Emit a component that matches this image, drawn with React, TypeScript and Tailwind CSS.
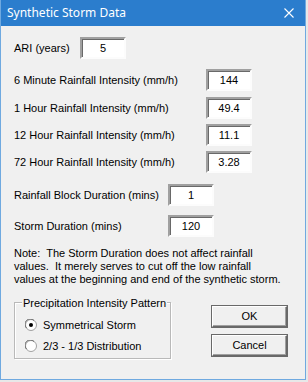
import React from 'react'

const FIELDS_TOP = [
  { label: '6 Minute Rainfall Intensity (mm/h)', value: '144', mt: 'mt-[10px]' },
  { label: '1 Hour Rainfall Intensity (mm/h)', value: '49.4', mt: 'mt-[6px]' },
  { label: '12 Hour Rainfall Intensity (mm/h)', value: '11.1', mt: 'mt-[5px]' },
  { label: '72 Hour Rainfall Intensity (mm/h)', value: '3.28', mt: 'mt-[5px]' },
]

function Field({ value }: { value: string }) {
  return (
    <div className="flex h-[22px] w-[46px] items-center justify-center border-2 border-t-[#a0a0a0] border-l-[#a0a0a0] border-b-[#fcfcfc] border-r-[#fcfcfc] bg-white shadow-[inset_1px_1px_0_0_#696969]">
      {value}
    </div>
  )
}

function Radio({ checked }: { checked?: boolean }) {
  return (
    <svg width="12" height="12" viewBox="0 0 12 12" className="shrink-0">
      <circle cx="6" cy="6" r="5.5" fill="#fff" stroke="#a0a0a0" />
      <path d="M1.5 9 A5 5 0 0 1 9 1.5" fill="none" stroke="#696969" />
      {checked && <circle cx="6" cy="6" r="2" fill="#000" />}
    </svg>
  )
}

function Button({ children }: { children: React.ReactNode }) {
  return (
    <button className="flex h-[21px] w-[75px] items-center justify-center border border-t-[#fff] border-l-[#fff] border-b-[#696969] border-r-[#696969] bg-[#f0f0f0] shadow-[inset_-1px_-1px_0_0_#a0a0a0,0_0_0_1px_#696969]">
      {children}
    </button>
  )
}

export default function App() {
  return (
    <div className="h-[382px] w-[308px] bg-[#e8e8e8] text-[11px] text-black" style={{ fontFamily: '"Liberation Sans", Arial, sans-serif' }}>
      <div className="flex h-[380px] w-[306px] flex-col border-x border-b border-[#6fa9e0] bg-[#f0f0f0]">
        {/* title bar */}
        <div className="flex h-[26px] shrink-0 items-center justify-between bg-[#2b7dcd] pl-[6px] pr-[11px] text-white">
          <span className="text-[12px]" style={{ fontFamily: '"Noto Sans", "Open Sans", sans-serif' }}>Synthetic Storm Data</span>
          <svg width="10" height="10" viewBox="0 0 10 10">
            <path d="M0.5 0.5 L9.5 9.5 M9.5 0.5 L0.5 9.5" stroke="#fff" strokeWidth="1.1" />
          </svg>
        </div>

        <div className="flex flex-1 flex-col pl-[13px] pr-[18px] pt-[11px]">
          <div className="flex h-[22px] items-center">
            <span className="w-[66px]">ARI (years)</span>
            <Field value="5" />
          </div>

          {FIELDS_TOP.map((f) => (
            <div key={f.label} className={`flex h-[22px] items-center ${f.mt}`}>
              <span className="w-[192px]">{f.label}</span>
              <Field value={f.value} />
            </div>
          ))}

          <div className="mt-[11px] flex h-[22px] items-center">
            <span className="w-[154px]">Rainfall Block Duration (mins)</span>
            <Field value="1" />
          </div>
          <div className="mt-[9px] flex h-[22px] items-center">
            <span className="w-[154px]">Storm Duration (mins)</span>
            <Field value="120" />
          </div>

          <p className="mt-[10px] whitespace-pre leading-[13px]">
            {'Note:  The Storm Duration does not affect rainfall\nvalues.  It merely serves to cut off the low rainfall\nvalues at the beginning and end of the synthetic storm.'}
          </p>

          <div className="mt-[16px] flex items-start justify-between">
            <div className="relative h-[57px] w-[157px] border border-[#b9b9b9] shadow-[1px_1px_0_0_#fff,inset_1px_1px_0_0_#fff]">
              <span className="absolute -top-[8px] left-[7px] bg-[#f0f0f0] px-[1px]">Precipitation Intensity Pattern</span>
              <div className="flex flex-col gap-[4px] pl-[10px] pt-[14px]">
                <div className="flex items-center gap-[6px]">
                  <Radio checked />
                  <span>Symmetrical Storm</span>
                </div>
                <div className="flex items-center gap-[6px]">
                  <Radio />
                  <span>2/3 - 1/3 Distribution</span>
                </div>
              </div>
            </div>
            <div className="mt-[4px] flex flex-col gap-[8px]">
              <Button>OK</Button>
              <Button>Cancel</Button>
            </div>
          </div>
        </div>
      </div>
    </div>
  )
}
